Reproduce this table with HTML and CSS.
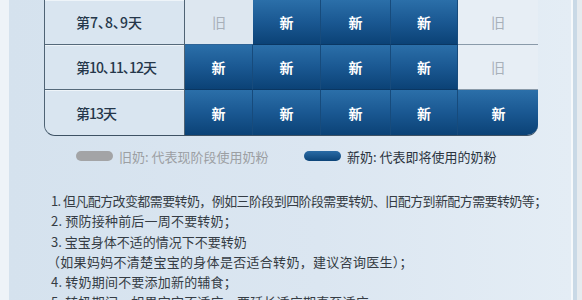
FILE: index.html
```html
<!DOCTYPE html>
<html lang="zh">
<head>
<meta charset="utf-8">
<link rel="stylesheet" href="styles.css">
</head>
<body>
<div class="page">
  <div class="panel">
    <div class="table">
      <div class="label l1">第7、8、9天</div>
      <div class="cell old">旧</div>
      <div class="cell new">新</div>
      <div class="cell new">新</div>
      <div class="cell new">新</div>
      <div class="cell old last">旧</div>

      <div class="label">第10、11、12天</div>
      <div class="cell new">新</div>
      <div class="cell new">新</div>
      <div class="cell new">新</div>
      <div class="cell new">新</div>
      <div class="cell old last">旧</div>

      <div class="label bottom">第13天</div>
      <div class="cell new bottom">新</div>
      <div class="cell new bottom">新</div>
      <div class="cell new bottom">新</div>
      <div class="cell new bottom">新</div>
      <div class="cell new bottom corner">新</div>
    </div>

    <div class="legend">
      <div class="legend-item old-item"><span class="pill pill-old"></span><span>旧奶: 代表现阶段使用奶粉</span></div>
      <div class="legend-item new-item"><span class="pill pill-new"></span><span>新奶: 代表即将使用的奶粉</span></div>
    </div>

    <div class="notes">
      <div class="line tight">1. 但凡配方改变都需要转奶，例如三阶段到四阶段需要转奶、旧配方到新配方需要转奶等；</div>
      <div class="line">2. 预防接种前后一周不要转奶；</div>
      <div class="line wide">3. 宝宝身体不适的情况下不要转奶</div>
      <div class="line paren">（如果妈妈不清楚宝宝的身体是否适合转奶，建议咨询医生）；</div>
      <div class="line">4. 转奶期间不要添加新的辅食；</div>
      <div class="line">5. 转奶期间，如果宝宝不适应，要延长适应期直至适应</div>
    </div>
  </div>
</div>
</body>
</html>
```

FILE: styles.css
```css
html, body {
  margin: 0;
  padding: 0;
}

body {
  width: 582px;
  height: 300px;
  overflow: hidden;
  font-family: "Noto Sans CJK SC", "Noto Sans", sans-serif;
  background: linear-gradient(to right,
    #eef3f8 0, #eef3f8 9px,
    transparent 9px, transparent 571px,
    #f6f9fb 571px, #f6f9fb 573px,
    #c9d9e6 573px, #c9d9e6 577px,
    #e6ebef 577px, #e6ebef 582px);
}

.page {
  display: flex;
  padding-left: 9px;
}

.panel {
  width: 562px;
  height: 300px;
  box-sizing: border-box;
  padding: 0 33px 0 35px;
  background: linear-gradient(to right, #d5e2ee 0%, #dbe6f1 55%, #e4edf5 100%);
}

/* ---------- table ---------- */
.table {
  display: grid;
  grid-template-columns: 140px 68px 68px 70px 67px 81px;
  grid-auto-rows: 45px;
  width: 494px;
  border-left: 1px solid #4f6374;
  border-bottom: 1px solid #3e5264;
  border-radius: 0 0 11px 11px;
  overflow: hidden;
  box-sizing: border-box;
  font-feature-settings: "palt";
}

.label {
  display: flex;
  align-items: center;
  padding-left: 31px;
  background: #d9e5f0;
  color: #25374a;
  font-size: 14px;
  font-weight: 500;
  letter-spacing: -1px;
  border-right: 1px solid #4f6374;
  border-bottom: 1px solid #55697a;
  box-shadow: inset 0 1px 0 #eef4f9;
}

.label.l1 {
  letter-spacing: 0;
}

.label.bottom {
  border-bottom: none;
}

.cell {
  display: flex;
  align-items: center;
  justify-content: center;
  font-size: 14px;
}

.cell.new {
  color: #ffffff;
  font-weight: 700;
  background: linear-gradient(to bottom, #2b6fa9 0%, #1a5892 50%, #0b4276 100%);
  border-right: 1px solid #174b7c;
  border-bottom: 1px solid #0a3763;
}

.cell.new.bottom {
  border-bottom: none;
}

.cell.new.corner {
  border-right: none;
}

.cell.old {
  color: #a8b0b9;
  background: #dde7f0;
  border-bottom: 1px solid #2f6496;
}

.cell.old.last {
  background: #e7eef5;
  border-right: 1px solid #9fadba;
  border-bottom: 1px solid #8a9aa9;
}

/* ---------- legend ---------- */
.legend {
  display: grid;
  grid-template-columns: 228px auto;
  align-items: center;
  height: 20px;
  margin-top: 10px;
  padding-left: 32px;
  font-size: 13px;
}

.legend-item {
  display: flex;
  align-items: center;
  gap: 6px;
}

.old-item {
  color: #9c9fa3;
}

.new-item {
  color: #2b3440;
}

.pill {
  display: block;
  width: 37px;
  height: 10px;
  border-radius: 5px;
}

.pill-old {
  background: #a3a4a6;
}

.pill-new {
  background: linear-gradient(to bottom, #2a6ba5 0%, #0c4478 100%);
}

/* ---------- notes ---------- */
.notes {
  margin-top: 25px;
  padding-left: 7px;
  color: #353c44;
  font-size: 13px;
}

.line {
  height: 20.3px;
  line-height: 20.3px;
  white-space: nowrap;
  letter-spacing: 0.2px;
}

.line.tight {
  letter-spacing: -0.6px;
}

.line.wide {
  letter-spacing: 0;
}

.line.paren {
  margin-left: -4px;
  letter-spacing: 0.3px;
}
```
